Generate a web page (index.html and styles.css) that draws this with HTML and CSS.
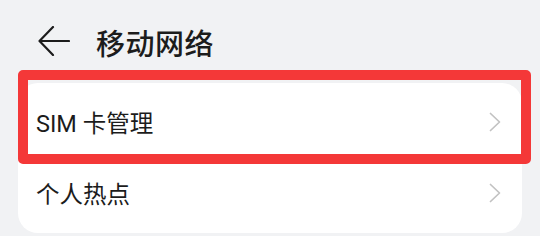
FILE: index.html
```html
<!DOCTYPE html>
<html lang="zh-CN">
<head>
    <meta charset="UTF-8">
    <meta name="viewport" content="width=540, initial-scale=1.0">
    <title>移动网络</title>
    <link rel="stylesheet" href="styles.css">
</head>
<body>
    <div class="header">
        <svg class="back" width="32" height="30" viewBox="0 0 32 30">
            <path d="M1.5 15 H31 M15 1 L1.5 15 L15 29" fill="none" stroke="#1c1c1c" stroke-width="2.2" stroke-linecap="round" stroke-linejoin="round"/>
        </svg>
        <h1>移动网络</h1>
    </div>

    <div class="card">
        <div class="row row-marked">
            <span class="label">SIM 卡管理</span>
            <svg class="chevron" width="12" height="20" viewBox="0 0 12 20">
                <path d="M1.5 1.5 L10.5 10 L1.5 18.5" fill="none" stroke="#c2c2c2" stroke-width="1.7" stroke-linecap="round" stroke-linejoin="round"/>
            </svg>
            <div class="mark"></div>
        </div>
        <div class="row">
            <span class="label">个人热点</span>
            <svg class="chevron" width="12" height="20" viewBox="0 0 12 20">
                <path d="M1.5 1.5 L10.5 10 L1.5 18.5" fill="none" stroke="#c2c2c2" stroke-width="1.7" stroke-linecap="round" stroke-linejoin="round"/>
            </svg>
        </div>
    </div>
</body>
</html>
```

FILE: styles.css
```css
/* Global */
body, html {
    margin: 0;
    padding: 0;
    background-color: #f1f2f4;
    font-family: Roboto, "Noto Sans CJK SC", sans-serif;
    color: #1c1c1c;
}

/* Title bar */
.header {
    height: 83px;
    display: flex;
    align-items: center;
    padding-left: 38px;
    box-sizing: border-box;
}

.header .back {
    display: block;
    margin-top: -2px;
}

.header h1 {
    margin: 0 0 0 26px;
    font-family: "Noto Sans CJK SC", sans-serif;
    font-size: 29px;
    font-weight: 500;
    letter-spacing: 0.5px;
}

/* Settings list */
.card {
    margin: 0 18px;
    background-color: #fff;
    border-radius: 20px;
    padding: 3px 0 5px;
}

.row {
    height: 71px;
    display: flex;
    align-items: center;
    justify-content: space-between;
    padding: 0 21px 0 18px;
    position: relative;
}

.row .label {
    font-size: 23.5px;
    font-family: Roboto, "Noto Sans CJK SC", sans-serif;
}

.chevron {
    display: block;
}

/* red highlight drawn over the first row */
.mark {
    position: absolute;
    left: 0;
    right: -9px;
    top: -16px;
    height: 94px;
    border: 10.5px solid #f43838;
    border-radius: 5px;
    box-sizing: border-box;
}
```
